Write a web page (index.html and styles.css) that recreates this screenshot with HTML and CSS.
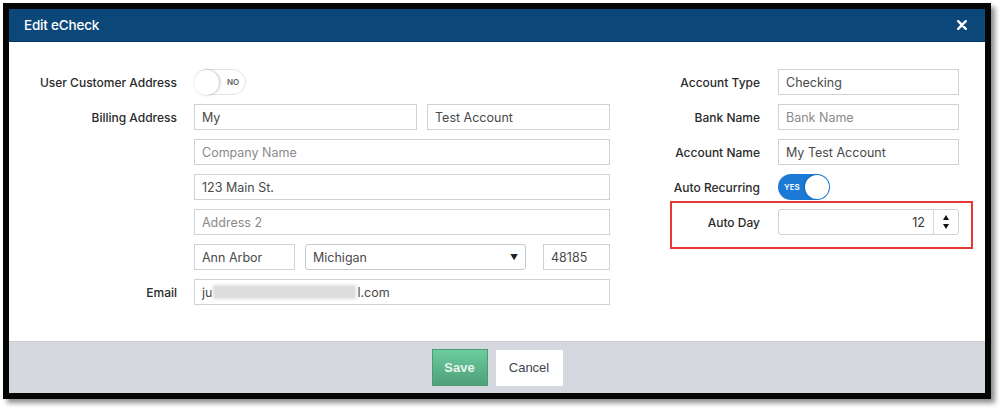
FILE: index.html
```html
<!DOCTYPE html>
<html>
<head>
<meta charset="utf-8">
<link rel="stylesheet" href="styles.css">
</head>
<body>
<div class="frame">
  <div class="modal">
    <div class="modal-header">
      <span class="title">Edit eCheck</span>
      <svg class="close" width="10" height="10" viewBox="0 0 10 10"><path d="M1.2 1.2 L8.8 8.8 M8.8 1.2 L1.2 8.8" stroke="#fff" stroke-width="2.4" stroke-linecap="round"/></svg>
    </div>
    <div class="modal-body">
      <div class="form-left">
        <div class="label r1">User Customer Address</div>
        <div class="field r1">
          <div class="toggle toggle-off"><span class="knob"></span><span class="tlabel">NO</span></div>
        </div>
        <div class="label r2">Billing Address</div>
        <div class="field r2 split">
          <div class="input w-first">My</div>
          <div class="input grow">Test Account</div>
        </div>
        <div class="field r3"><div class="input full placeholder">Company Name</div></div>
        <div class="field r4"><div class="input full">123 Main St.</div></div>
        <div class="field r5"><div class="input full placeholder">Address 2</div></div>
        <div class="field r6 split">
          <div class="input w-city">Ann Arbor</div>
          <div class="input select w-state">Michigan<span class="caret">&#9660;</span></div>
          <div class="input w-zip">48185</div>
        </div>
        <div class="label r7">Email</div>
        <div class="field r7"><div class="input full">ju<span class="blur"></span>l.com</div></div>
      </div>
      <div class="form-right">
        <div class="label">Account Type</div>
        <div class="field"><div class="input full">Checking</div></div>
        <div class="label">Bank Name</div>
        <div class="field"><div class="input full placeholder">Bank Name</div></div>
        <div class="label">Account Name</div>
        <div class="field"><div class="input full">My Test Account</div></div>
        <div class="label">Auto Recurring</div>
        <div class="field">
          <div class="toggle toggle-on"><span class="tlabel">YES</span><span class="knob"></span></div>
        </div>
        <div class="label">Auto Day</div>
        <div class="field highlight-host">
          <div class="input full number">
            <span class="num">12</span>
            <span class="spin"><span class="up"></span><span class="down"></span></span>
          </div>
          <div class="highlight"></div>
        </div>
      </div>
    </div>
    <div class="modal-footer">
      <button class="btn btn-save">Save</button>
      <button class="btn btn-cancel">Cancel</button>
    </div>
  </div>
</div>
</body>
</html>
```

FILE: styles.css
```css
* { box-sizing: border-box; }
html, body { margin: 0; padding: 0; background: #fff; }
body {
  font-family: Inter, "Noto Sans", "Liberation Sans", sans-serif;
  width: 1004px;
  height: 412px;
  overflow: hidden;
}
.frame {
  margin: 3px 0 0 3px;
  width: 988px;
  height: 396px;
  border: 6px solid #050505;
  box-shadow: 4px 4px 5px rgba(0,0,0,0.45);
}
.modal {
  width: 100%;
  height: 100%;
  display: flex;
  flex-direction: column;
  background: #fff;
}
.modal-header {
  height: 33px;
  background: #0b4779;
  border-bottom: 1px solid #083a66;
  display: flex;
  align-items: center;
  justify-content: space-between;
  padding: 0 18px 0 15px;
  color: #fff;
}
.title { font-size: 13.5px; font-weight: 500; letter-spacing: -0.2px; }
.close { display: block; }
.modal-body {
  flex: 1;
  display: flex;
  justify-content: space-between;
  padding: 27px 26px 0 0;
}
.form-left {
  display: grid;
  grid-template-columns: 168px 416px;
  grid-auto-rows: 26px;
  column-gap: 17px;
  row-gap: 9px;
}
.form-left .label { grid-column: 1; }
.form-left .field { grid-column: 2; }
.r1 { grid-row: 1; }
.r2 { grid-row: 2; }
.r3 { grid-row: 3; }
.r4 { grid-row: 4; }
.r5 { grid-row: 5; }
.r6 { grid-row: 6; }
.r7 { grid-row: 7; }
.form-right {
  display: grid;
  grid-template-columns: 120px 181px;
  grid-auto-rows: 26px;
  column-gap: 18px;
  row-gap: 9px;
}
.label {
  display: flex;
  align-items: center;
  justify-content: flex-end;
  font-size: 12px;
  font-weight: 500;
  color: #2a2a2a;
  white-space: nowrap;
}
.field { display: flex; align-items: center; position: relative; }
.split { gap: 10px; }
.input {
  height: 26px;
  border: 1px solid #cdd2d9;
  display: flex;
  align-items: center;
  padding: 0 7px;
  font-size: 12.5px;
  color: #4a4a4a;
  background: #fff;
  white-space: nowrap;
}
.input.placeholder { color: #8a8a8a; }
.full { width: 100%; }
.grow { flex: 1; }
.w-first { width: 223px; }
.w-city { width: 101px; }
.w-state { width: 221px; margin-right: 7px; }
.w-zip { width: 67px; }
.select {
  border-radius: 3px;
  border-color: #c4c9d0;
  justify-content: space-between;
}
.caret { font-size: 8px; color: #222; }
.blur {
  display: inline-block;
  width: 143px;
  height: 14px;
  background: #dcdcdc;
  filter: blur(1.5px);
  margin: 0 1px;
}
.toggle {
  width: 52px;
  height: 26px;
  border-radius: 13px;
  display: flex;
  align-items: center;
  position: relative;
  font-size: 8px;
  font-weight: 600;
}
.toggle-off {
  background: #fff;
  border: 1px solid #e3e3e3;
}
.toggle-off .knob {
  width: 25px;
  height: 25px;
  border-radius: 50%;
  background: #fff;
  box-shadow: 1px 0 3px rgba(0,0,0,0.25);
  margin-left: -1px;
}
.toggle-off .tlabel { color: #666; margin-left: 8px; }
.toggle-on {
  background: #1a7ad6;
  justify-content: space-between;
}
.toggle-on .tlabel { color: #fff; margin-left: 6px; }
.toggle-on .knob {
  width: 24px;
  height: 24px;
  border-radius: 50%;
  background: #fff;
  margin-right: 1px;
  box-shadow: -1px 0 2px rgba(0,0,0,0.2);
}
.number { padding: 0; justify-content: flex-end; border-radius: 3px; }
.num { padding-right: 8px; color: #333; }
.spin {
  width: 25px;
  height: 100%;
  border-left: 1px solid #d6dbe1;
  display: flex;
  flex-direction: column;
  align-items: center;
  justify-content: center;
  gap: 4px;
}
.up, .down { width: 0; height: 0; border-left: 3.5px solid transparent; border-right: 3.5px solid transparent; }
.up { border-bottom: 5px solid #111; }
.down { border-top: 5px solid #111; }
.highlight {
  position: absolute;
  left: -108px;
  top: -8px;
  right: -14px;
  bottom: -14px;
  border: 2px solid #e53935;
  pointer-events: none;
}
.modal-footer {
  height: 52px;
  background: #d5d9df;
  border-top: 1px solid #c9cdd3;
  display: flex;
  align-items: center;
  justify-content: center;
  gap: 8px;
}
.btn {
  font-family: "Liberation Sans", Arial, sans-serif;
  font-size: 13px;
  border: none;
  height: 36px;
  padding: 0;
}
.btn-save {
  width: 56px;
  height: 37px;
  background: linear-gradient(#6ccc9e, #4ea079);
  color: #e8f6ee;
  font-weight: bold;
  border: 1px solid #4d9b75;
}
.btn-cancel {
  width: 67px;
  background: #fff;
  color: #3d4550;
}
```
